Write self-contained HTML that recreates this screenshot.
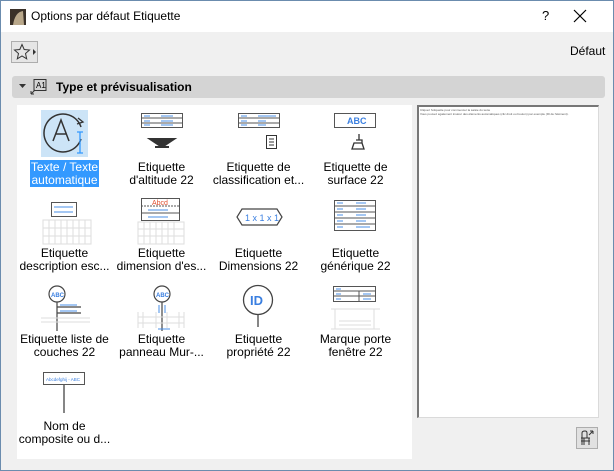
<!DOCTYPE html><html><head><meta charset="utf-8"><style>
*{margin:0;padding:0;box-sizing:border-box}
body{width:614px;height:471px;background:#f0f0f0;font-family:"Liberation Sans",sans-serif;font-size:12px;color:#000;position:relative;overflow:hidden;border:1px solid #6b8cae}
.t{position:absolute;top:0;left:0;right:0;height:31px;background:#fff}
.a{position:absolute}
.c{position:absolute;width:97px;text-align:center;line-height:13px;font-size:12px}
.sel span{background:#3399ff;color:#fff;padding:0 1px}
svg{position:absolute;overflow:visible}
</style></head><body>
<div class="t">
<svg style="left:9px;top:8px" width="16" height="16"><rect width="16" height="16" fill="#3a3129"/><path d="M3 16 Q5 3 13 2 L14 16 Z" fill="#b9a88b"/></svg>
<div class="a" style="left:30px;top:8px;font-size:12px">Options par défaut Etiquette</div>
<div class="a" style="left:541px;top:7px;font-size:13px">?</div>
<svg style="left:573px;top:9px" width="12" height="12"><path d="M0 0L12 12M12 0L0 12" stroke="#000" stroke-width="1.2"/></svg>
</div>
<div class="a" style="left:10px;top:40px;width:27px;height:22px;border:1px solid #adadad;background:#e5e5e5"></div>
<svg style="left:12px;top:42px" width="24" height="18"><path d="M9 1.5L11.2 6.5 16.5 7 12.5 10.5 13.7 15.8 9 13 4.3 15.8 5.5 10.5 1.5 7 6.8 6.5Z" fill="none" stroke="#333"/><path d="M20 6L23 9 20 12Z" fill="#333"/></svg>
<div class="a" style="left:569px;top:43px">Défaut</div>
<div class="a" style="left:11px;top:75px;width:593px;height:22px;background:#d4d4d4;border-radius:3px"></div>
<svg style="left:18px;top:83px" width="8" height="6"><path d="M0 0H7L3.5 4Z" fill="#333"/></svg>
<svg style="left:29px;top:78px" width="18" height="16"><rect x="4" y="0.5" width="12" height="11" fill="none" stroke="#333"/><text x="6" y="9" font-size="8" font-family="Liberation Sans">A1</text><path d="M1 15L5 11M1 15V12M1 15H4" stroke="#333" fill="none"/></svg>
<div class="a" style="left:55px;top:79px;font-weight:bold">Type et prévisualisation</div>
<div class="a" style="left:16px;top:104px;width:395px;height:354px;background:#fff"></div>
<div class="a" style="left:416px;top:104px;width:182px;height:313px;background:#fff;border:1px solid #dadada;border-left:2px solid #777;border-top:2px solid #777"></div>
<div class="a" style="left:419px;top:107px;font-size:3px;color:#555;line-height:4px">Cliquez l'étiquette pour commencer la saisie du texte<br>Vous pouvez également insérer des éléments automatiques (clic droit ou bouton) par exemple (ID de l'élément).</div>
<div class="a" style="left:575px;top:426px;width:22px;height:22px;border:1px solid #adadad;background:#e1e1e1"></div>
<svg style="left:578px;top:429px" width="16" height="16"><path d="M3 15V3Q3 1 6 1Q8 1 8 3V8H2M5 8V15M10 8V15M2 11H11M3 8L11 8" fill="none" stroke="#333"/><path d="M10 5L14 1M14 1V4M14 1H11" stroke="#333" fill="none"/></svg>

<!-- row1 -->
<div class="a" style="left:40px;top:109px;width:47px;height:47px;background:#cce4f7"></div>
<svg style="left:40px;top:110px" width="48" height="46"><path d="M40 16A19 19 0 1 0 40 28" fill="none" stroke="#333" stroke-width="1.5"/><path d="M37 7L42 11 36 13" fill="none" stroke="#333" stroke-width="1.3"/><path d="M12 30L20 9 28 30M15 23H25" fill="none" stroke="#333" stroke-width="1.5"/><path d="M39 21V42M36 21H42M36 42H42" stroke="#3399ff" stroke-width="1.3"/></svg>
<div class="c sel" style="left:15px;top:160px"><span>Texte / Texte</span><br><span>automatique</span></div>
<svg style="left:140px;top:112px" width="44" height="40"><rect x="0.5" y="0.5" width="41" height="14" fill="#fff" stroke="#555"/><path d="M0 5H42M0 10H42" stroke="#555"/><path d="M3 3H9M20 3H32M3 8H9M20 8H32M3 12H9M20 12H32" stroke="#4a8fe7" stroke-width="1"/><path d="M9 26H33L24 32H18Z M14 34H28" fill="#333" stroke="#333" stroke-width="2"/></svg>
<div class="c" style="left:112px;top:160px">Etiquette<br>d'altitude 22</div>
<svg style="left:237px;top:112px" width="44" height="40"><rect x="0.5" y="0.5" width="41" height="14" fill="#fff" stroke="#555"/><path d="M0 5H42M0 10H42" stroke="#555"/><path d="M3 3H9M20 3H38M3 8H9M20 8H28M3 12H9M20 12H28" stroke="#4a8fe7"/><rect x="28.5" y="22.5" width="10" height="13" fill="#fff" stroke="#333"/><path d="M31 26H36M31 29H36M31 32H36" stroke="#333"/></svg>
<div class="c" style="left:209px;top:160px">Etiquette de<br>classification et...</div>
<svg style="left:333px;top:112px" width="44" height="40"><rect x="0.5" y="0.5" width="41" height="14" fill="#fff" stroke="#555"/><text x="13" y="11" font-size="9" fill="#3a7fe0" font-family="Liberation Sans" font-weight="bold">ABC</text><path d="M25 21V27M22 27H28V30H20L18 36H30L28 30" fill="none" stroke="#333" stroke-width="1.3"/></svg>
<div class="c" style="left:306px;top:160px">Etiquette de<br>surface 22</div>
<!-- row2 -->
<svg style="left:40px;top:201px" width="50" height="42"><rect x="10.5" y="0.5" width="25" height="14" fill="#fff" stroke="#555"/><path d="M13 5H32M13 10H32" stroke="#4a8fe7"/><path d="M2 18H50V42H2ZM2 26H50M2 34H50M8 18V42M14 18V42M20 18V42M26 18V42M32 18V42M38 18V42M44 18V42" fill="none" stroke="#ddd"/></svg>
<div class="c" style="left:15px;top:246px">Etiquette<br>description esc...</div>
<svg style="left:137px;top:197px" width="50" height="46"><rect x="3.5" y="0.5" width="38" height="22" fill="#fff" stroke="#555"/><text x="14" y="7" font-size="7" fill="#e05030" font-family="Liberation Sans">Abcd</text><path d="M3 8H42" stroke="#555" stroke-dasharray="2 1"/><path d="M3 15H42" stroke="#555"/><path d="M10 12H30M10 19H30" stroke="#4a8fe7"/><path d="M0 24H46V46H0ZM0 31H46M0 38H46M6 24V46M12 24V46M18 24V46M24 24V46M30 24V46M36 24V46" fill="none" stroke="#ddd"/></svg>
<div class="c" style="left:112px;top:246px">Etiquette<br>dimension d'es...</div>
<svg style="left:235px;top:207px" width="48" height="18"><path d="M6 1H41L46 9 41 17H6L1 9Z" fill="#fff" stroke="#444" stroke-width="1.2"/><text x="9" y="13" font-size="9" fill="#3a7fe0" font-family="Liberation Sans">1 x 1 x 1</text></svg>
<div class="c" style="left:209px;top:246px">Etiquette<br>Dimensions 22</div>
<svg style="left:333px;top:199px" width="44" height="32"><rect x="0.5" y="0.5" width="41" height="30" fill="#fff" stroke="#555"/><path d="M0 6H42M0 12H42M0 18H42M0 24H42" stroke="#555"/><path d="M3 3H9M22 3H32M3 9H9M22 9H32M3 15H9M22 15H32M3 21H9M22 21H32M3 27H9M22 27H36" stroke="#4a8fe7"/></svg>
<div class="c" style="left:306px;top:246px">Etiquette<br>générique 22</div>
<!-- row3 -->
<svg style="left:40px;top:284px" width="50" height="46"><circle cx="16" cy="9" r="8" fill="#fff" stroke="#444" stroke-width="1.2"/><text x="10" y="12" font-size="6" fill="#3a7fe0" font-weight="bold" font-family="Liberation Sans">ABC</text><path d="M16 17V46M16 22H40M16 28H40" stroke="#444" stroke-width="1.2"/><path d="M19 20H36M19 26H36" stroke="#4a8fe7"/><path d="M0 33H49M0 37H49" stroke="#ddd"/></svg>
<div class="c" style="left:15px;top:332px">Etiquette liste de<br>couches 22</div>
<svg style="left:137px;top:284px" width="50" height="46"><circle cx="24" cy="9" r="8" fill="#fff" stroke="#444" stroke-width="1.2"/><text x="18" y="12" font-size="6" fill="#3a7fe0" font-weight="bold" font-family="Liberation Sans">ABC</text><path d="M24 17V46" stroke="#444" stroke-width="1.2"/><path d="M21 20V28M27 20V28M20 44H32" stroke="#4a8fe7"/><path d="M0 32H46M0 38H46M0 27V43M5 27V43M18 27V43M29 27V43M41 27V43M46 27V43" fill="none" stroke="#ddd"/></svg>
<div class="c" style="left:112px;top:332px">Etiquette<br>panneau Mur-...</div>
<svg style="left:242px;top:284px" width="34" height="46"><circle cx="15" cy="15" r="14.5" fill="#fff" stroke="#444" stroke-width="1.3"/><text x="7" y="20" font-size="13" fill="#3a7fe0" font-family="Liberation Sans" font-weight="bold">ID</text><path d="M15 30V42" stroke="#444" stroke-width="1.3"/></svg>
<div class="c" style="left:209px;top:332px">Etiquette<br>propriété 22</div>
<svg style="left:330px;top:285px" width="50" height="46"><rect x="2.5" y="0.5" width="42" height="15" fill="#fff" stroke="#555"/><path d="M2 5H45M28 5V16M2 10H45" stroke="#555"/><path d="M5 3H10M5 8H10M5 13H10M32 8H40M32 13H40" stroke="#4a8fe7"/><path d="M0 23H49M0 43H49M4 23V43M43 23V43M8 35H40M8 39H40" fill="none" stroke="#ddd"/></svg>
<div class="c" style="left:306px;top:332px">Marque porte<br>fenêtre 22</div>
<!-- row4 -->
<svg style="left:42px;top:371px" width="44" height="44"><rect x="0.5" y="0.5" width="41" height="12" fill="#fff" stroke="#555"/><text x="3" y="9" font-size="4.5" fill="#3a7fe0" font-family="Liberation Sans">Abcdefghij - ABC</text><path d="M21 13V41" stroke="#444" stroke-width="1.3"/></svg>
<div class="c" style="left:15px;top:419px">Nom de<br>composite ou d...</div>
</body></html>
